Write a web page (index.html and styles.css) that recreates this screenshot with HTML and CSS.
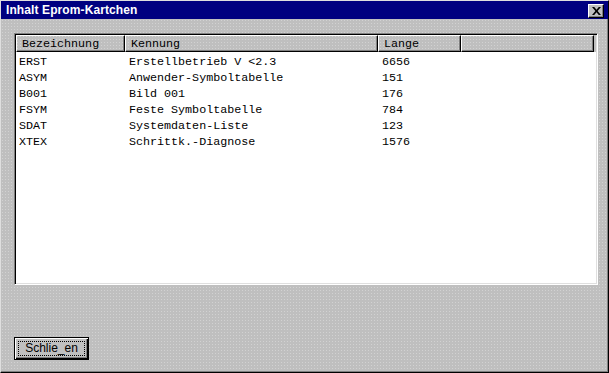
FILE: index.html
```html
<!DOCTYPE html>
<html lang="de">
<head>
    <meta charset="UTF-8">
    <title>Inhalt Eprom-Kartchen</title>
    <link rel="stylesheet" href="styles.css">
</head>
<body>
    <div class="window">
        <div class="titlebar">
            <span class="title">Inhalt Eprom-Kartchen</span>
            <button class="close-btn" aria-label="Schließen">
                <svg width="9" height="8" viewBox="0 0 9 8">
                    <path d="M0 0h2.2l2.3 2.7L6.8 0H9L5.6 4 9 8H6.8L4.5 5.3 2.2 8H0l3.4-4z" fill="#000"/>
                </svg>
            </button>
        </div>
        <div class="content">
            <div class="listview">
                <div class="list-header">
                    <div class="hcell">Bezeichnung</div>
                    <div class="hcell">Kennung</div>
                    <div class="hcell">Lange</div>
                    <div class="hcell"></div>
                </div>
                <div class="list-body">
                    <div class="row"><span>ERST</span><span>Erstellbetrieb V &lt;2.3</span><span>6656</span></div>
                    <div class="row"><span>ASYM</span><span>Anwender-Symboltabelle</span><span>151</span></div>
                    <div class="row"><span>B001</span><span>Bild 001</span><span>176</span></div>
                    <div class="row"><span>FSYM</span><span>Feste Symboltabelle</span><span>784</span></div>
                    <div class="row"><span>SDAT</span><span>Systemdaten-Liste</span><span>123</span></div>
                    <div class="row"><span>XTEX</span><span>Schrittk.-Diagnose</span><span>1576</span></div>
                </div>
            </div>
            <div class="footer">
                <button class="button"><span class="focus">Schlie_en</span></button>
            </div>
        </div>
    </div>
</body>
</html>
```

FILE: styles.css
```css
html, body {
    margin: 0;
    padding: 0;
    background: #c0c0c0;
}
.window {
    box-sizing: border-box;
    width: 609px;
    height: 373px;
    display: flex;
    flex-direction: column;
    border: 1px solid;
    border-color: #dfdfdf #000 #000 #dfdfdf;
    box-shadow: inset -1px -1px #808080;
    background-color: #bfbfbf;
    background-image: radial-gradient(circle, #d2d2d2 0.6px, transparent 0.7px);
    background-size: 3px 3px;
}
.titlebar {
    height: 18px;
    background: #000080;
    display: flex;
    align-items: center;
    justify-content: space-between;
    padding: 0 4px 0 5px;
}
.title {
    color: #fff;
    font: bold 12px "Liberation Sans", Arial, sans-serif;
    letter-spacing: 0.1px;
}
.close-btn {
    box-sizing: border-box;
    width: 16px;
    height: 14px;
    margin-top: 2px;
    padding: 0;
    display: flex;
    align-items: center;
    justify-content: center;
    background: #c0c0c0;
    border: 1px solid;
    border-color: #fff #000 #000 #fff;
    box-shadow: inset -1px -1px #808080;
}
.content {
    flex: 1;
    display: flex;
    flex-direction: column;
    padding: 14px 10px 12px 13px;
}
.listview {
    height: 252px;
    box-sizing: border-box;
    display: flex;
    flex-direction: column;
    border: 1px solid;
    border-color: #808080 #fff #fff #808080;
    box-shadow: inset 1px 1px #000, inset -1px -1px #dfdfdf;
    padding: 1px;
    background: #fff;
    font: 11.7px "Liberation Mono", "Courier New", monospace;
    color: #000;
}
.list-header {
    display: grid;
    grid-template-columns: 109px 253px 83px 133px;
    height: 17px;
    background-color: #bfbfbf;
    background-image: radial-gradient(circle, #d2d2d2 0.6px, transparent 0.7px);
    background-size: 3px 3px;
}
.hcell {
    box-sizing: border-box;
    display: flex;
    align-items: center;
    padding-left: 5px;
    border-left: 1px solid #fff;
    border-top: 1px solid #fff;
    border-right: 1px solid #000;
    border-bottom: 1px solid #000;
    box-shadow: inset -1px -1px #808080;
}
.list-body {
    flex: 1;
    padding-top: 2px;
}
.row {
    display: grid;
    grid-template-columns: 107px 253px 83px;
    height: 16px;
    align-items: center;
}
.row span {
    padding-left: 6px;
    white-space: pre;
}
.row span:first-child {
    padding-left: 3px;
}
.footer {
    flex: 1;
    display: flex;
    align-items: flex-end;
}
.button {
    box-sizing: border-box;
    width: 75px;
    height: 23px;
    padding: 3px;
    background: #c0c0c0;
    border: 1px solid #000;
    box-shadow: inset 1px 1px #fff, inset -1px -1px #000, inset -2px -2px #808080;
    font: 12px "Liberation Sans", Arial, sans-serif;
    color: #000;
}
.focus {
    display: block;
    height: 100%;
    line-height: 13px;
    text-align: center;
    border: 1px dotted #000;
    box-sizing: border-box;
}
```
